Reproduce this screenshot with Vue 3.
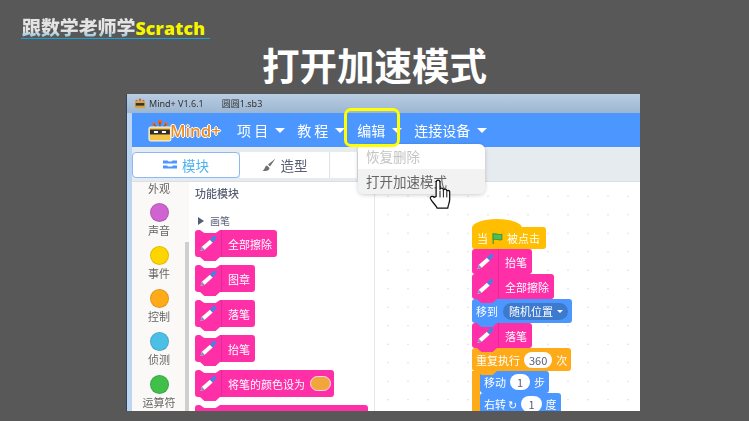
<script setup>
const menus = ["项 目", "教 程", "编辑", "连接设备"];
const cats = [
  { name: "声音", color: "#cf63cf" },
  { name: "事件", color: "#ffd500" },
  { name: "控制", color: "#ffab19" },
  { name: "侦测", color: "#4cbfe6" },
  { name: "运算符", color: "#40bf4a" },
];
const palette = ["全部擦除", "图章", "落笔", "抬笔"];
</script>

<template>
  <div class="slide">
    <svg class="defs">
      <symbol id="pen" viewBox="0 0 20 18">
        <path d="M1.500 17 3 12.500 11.500 5l3 3L6 15.500z" fill="#fff" />
        <path d="M11.500 5 15.500 1c1-.8 3.200 1.200 2.500 2.500L14.500 8z" fill="#3d86e6" />
        <path d="M1.500 17 3 12.500 6 15.500z" fill="#7f8fb5" />
      </symbol>
    </svg>

    <div class="head"><span>跟数学老师学</span><b>Scratch</b></div>
    <h1 class="title">打开加速模式</h1>

    <div class="window">
      <div class="titlebar">
        <svg class="mini" viewBox="0 0 14 12">
          <circle cx="7" cy="1.800" r="1.500" fill="#c8672a" />
          <circle cx="3" cy="2.800" r="1.200" fill="#c8672a" />
          <circle cx="11" cy="2.800" r="1.200" fill="#c8672a" />
          <rect x="1" y="3.500" width="12" height="8" rx="1" fill="#d9a23b" />
          <rect x="2" y="5.500" width="10" height="3" fill="#333" />
        </svg>
        <span>Mind+ V1.6.1</span>
        <span class="file">圆圆1.sb3</span>
      </div>

      <div class="menubar">
        <div class="logo">
          <svg viewBox="0 0 24 24" width="24" height="24">
            <circle cx="12" cy="4" r="2.200" fill="#e8672c" />
            <circle cx="6" cy="6" r="1.800" fill="#e8672c" />
            <circle cx="18" cy="6" r="1.800" fill="#e8672c" />
            <path d="M12 4v5M6 6l2 3M18 6l-2 3" stroke="#7a4a14" />
            <rect x="1" y="9" width="22" height="14" rx="1.500" fill="#f5c243" stroke="#fff" />
            <rect x="2" y="11.500" width="20" height="5" fill="#2d2d2d" />
            <rect x="6" y="13" width="4" height="2" fill="#fff" />
            <rect x="14" y="13" width="4" height="2" fill="#fff" />
          </svg>
          <span>Mind+</span>
        </div>
        <div v-for="m in menus" :key="m" class="menu">{{ m }}<i class="caret"></i></div>
      </div>

      <div class="tabs">
        <div class="tab active">
          <svg viewBox="0 0 14 9" width="14" height="9"><path d="M0 .500h4.500l1 1h3l1-1H14v3H0zM0 5.500h4l1 1h4l1-1h4v3H0z" fill="#4c97ff" /></svg>
          模块
        </div>
        <div class="tab second">
          <svg viewBox="0 0 14 14" width="14" height="14"><path d="M13.500.500 6 6.500 8 8.500zM5 7.500c-2.500.5-1.500 4-4.500 5 3.500 1.500 7 0 7-2.500z" fill="#707070" /></svg>
          造型
        </div>
        <div class="tab narrow"></div>
      </div>

      <div class="body">
        <div class="cats">
          <div class="cat-top">外观</div>
          <div v-for="c in cats" :key="c.name" class="cat">
            <i :style="{ background: c.color }"></i>
            <span>{{ c.name }}</span>
          </div>
          <div class="scroll"></div>
        </div>

        <div class="palette">
          <div class="pal-title">功能模块</div>
          <div class="pal-group"><i></i>画笔</div>
          <div v-for="p in palette" :key="p" class="block pink big">
            <span class="pen"><svg width="19" height="17"><use href="#pen" /></svg></span>
            {{ p }}
          </div>
          <div class="block pink big">
            <span class="pen"><svg width="19" height="17"><use href="#pen" /></svg></span>
            将笔的颜色设为
            <i class="swatch"></i>
          </div>
          <div class="block pink big cut"></div>
        </div>

        <div class="workspace">
          <div class="stack">
            <div class="hat">
              当
              <svg viewBox="0 0 12 12" width="13" height="13"><path d="M2 1v10" stroke="#3f8f3a" fill="none" /><path d="M2 2c3-1 5 1 8 0v5c-3 1-5-1-8 0z" fill="#4cbf56" stroke="#45993d" /></svg>
              被点击
            </div>
            <div class="block pink">
              <span class="pen"><svg width="19" height="17"><use href="#pen" /></svg></span>抬笔
            </div>
            <div class="block pink">
              <span class="pen"><svg width="19" height="17"><use href="#pen" /></svg></span>全部擦除
            </div>
            <div class="block blue tall">移到 <span class="drop">随机位置<i class="caret tiny"></i></span></div>
            <div class="block pink">
              <span class="pen"><svg width="19" height="17"><use href="#pen" /></svg></span>落笔
            </div>
            <div class="block orange">重复执行 <span class="num wide">360</span> 次</div>
            <div class="inner">
              <div class="block blue">移动 <span class="num">1</span> 步</div>
              <div class="block blue">右转 ↻ <span class="num">1</span> 度</div>
            </div>
          </div>
        </div>
      </div>

      <div class="dropdown">
        <div class="item off">恢复删除</div>
        <div class="item on">打开加速模式</div>
      </div>
      <div class="ring"></div>
      <svg class="hand" viewBox="0 0 22 32" width="22" height="31">
        <path d="M7 18V3.500c0-3 4-3 4 0V11c0-2 3.500-2 3.500 0v1c0-2 3.500-2 3.500 0v1c0-1.500 3-1.500 3 0v8c0 4-1.500 5-2 9H8c-1-3-6-7-7-10-.5-2 3-3 4-1z" fill="#fff" stroke="#111" stroke-width="1.300" />
        <path d="M11 12v7M14.500 12v7M18 13v6" stroke="#111" fill="none" />
      </svg>
    </div>
  </div>
</template>

<style>
html,
body {
  margin: 0;
}
</style>

<style scoped>
.slide {
  width: 749px;
  height: 421px;
  overflow: hidden;
  background: #585858;
  font-family: "Noto Sans CJK SC", "Noto Sans", sans-serif;
  display: flex;
  flex-direction: column;
  position: relative;
}
.defs {
  display: none;
}

/* header */
.head {
  margin: 15px 0 0 21px;
  width: 189px;
  height: 24px;
  box-sizing: border-box;
  padding-left: 1px;
  border-bottom: 1px solid #1c9fd0;
  font-size: 19px;
  line-height: 23px;
  font-weight: 900;
  white-space: nowrap;
  filter: blur(0.4px);
}
.head span {
  letter-spacing: -0.1px;
  color: transparent;
  background: linear-gradient(#e4e4e4 65%, #9ccbe0 85%);
  -webkit-background-clip: text;
  background-clip: text;
}
.head b {
  color: #f5f500;
  font-family: "Open Sans", sans-serif;
  font-size: 18px;
  font-weight: 800;
}
.title {
  margin: -2px 0 0;
  text-align: center;
  color: #fff;
  font-size: 37.5px;
  line-height: 54px;
  font-weight: 700;
}

/* window */
.window {
  position: relative;
  margin: 3px 0 0 127px;
  width: 513px;
  height: 317px;
  background: #bcd6f2;
  box-shadow: -1px 0 0 #33435a;
  font-size: 13px;
  color: #575e75;
  filter: blur(0.45px);
}
.titlebar {
  height: 19px;
  box-sizing: border-box;
  padding-left: 7px;
  display: flex;
  align-items: center;
  gap: 3px;
  background: linear-gradient(#b9cde2, #9cb6d2);
  color: #333;
  font-size: 9px;
  font-family: "Noto Sans", "Noto Sans CJK SC", sans-serif;
}
.mini {
  flex: none;
  width: 12px;
  height: 11px;
}
.file {
  margin-left: 15px;
}
.menubar {
  height: 34px;
  margin-left: 5px;
  background: #4c97ff;
  display: flex;
  align-items: center;
  color: #fff;
  font-size: 14px;
}
.logo {
  display: flex;
  align-items: center;
  margin: 0 16px 0 16px;
  width: 73px;
  color: #f08a1d;
  font-size: 17px;
  font-weight: 500;
  font-family: "Noto Sans", sans-serif;
  text-shadow: 1px 0 0 #fff, -1px 0 0 #fff, 0 1px 0 #fff, 0 -1px 0 #fff;
}
.logo span {
  margin-left: -2px;
}
.menu {
  display: flex;
  align-items: center;
  margin-right: 12px;
  white-space: nowrap;
}
.caret {
  display: block;
  margin-left: 7px;
  width: 0;
  height: 0;
  border: 5px solid transparent;
  border-top: 5px solid #fff;
  border-bottom: 0;
}
.caret.tiny {
  margin-left: 4px;
  border-width: 3px 3px 0;
}

/* tabs */
.tabs {
  height: 35px;
  margin-left: 5px;
  padding-top: 5px;
  box-sizing: border-box;
  background: #e6ebf0;
  border-bottom: 1px solid #d9dfe6;
  display: flex;
  color: #575e75;
  font-size: 13.5px;
}
.tab {
  width: 108px;
  height: 26px;
  padding-bottom: 1px;
  box-sizing: border-box;
  background: #fff;
  border-right: 1px solid #dce2e8;
  display: flex;
  align-items: center;
  justify-content: center;
  gap: 5px;
}
.tab.active {
  border: 1px solid #8ab9f5;
  border-radius: 4px;
  color: #4cb4f0;
}
.tab.second {
  width: 90px;
}
.tab.narrow {
  width: 28px;
}

/* left side */
.body {
  display: flex;
  height: 229px;
  margin-left: 5px;
  background: #fff;
}
.cats {
  position: relative;
  width: 57px;
  flex: none;
  box-sizing: border-box;
  padding-right: 3px;
  background: #faf9f7;
  text-align: center;
  font-size: 11px;
  color: #666;
}
.cat-top {
  line-height: 13px;
}
.cat {
  height: 43px;
  box-sizing: border-box;
  padding-top: 8px;
  display: flex;
  flex-direction: column;
  align-items: center;
  line-height: 14px;
}
.cat i {
  display: block;
  flex: none;
  width: 19px;
  height: 19px;
  box-sizing: border-box;
  border: 1px solid rgba(0, 0, 0, 0.12);
  border-radius: 50%;
  margin-bottom: 1px;
}
.scroll {
  position: absolute;
  right: 0;
  top: 60px;
  bottom: 0;
  width: 4px;
  background: #cfcfcf;
}
.palette {
  width: 186px;
  flex: none;
  box-sizing: border-box;
  padding: 4px 0 0 6px;
  border-right: 1px solid #e4e6ea;
  overflow: hidden;
}
.pal-title {
  font-size: 11px;
  font-weight: 500;
  line-height: 14px;
  color: #575e75;
}
.pal-group {
  display: flex;
  align-items: center;
  margin: 14px 0 3px 3px;
  font-size: 10px;
  line-height: 13px;
}
.pal-group i {
  width: 0;
  height: 0;
  margin-right: 6px;
  border: 4px solid transparent;
  border-left: 6px solid #575e75;
  border-right: 0;
}

/* blocks */
.block {
  position: relative;
  display: flex;
  align-items: center;
  width: max-content;
  height: 22px;
  line-height: 14px;
  padding: 0 4px;
  border-radius: 3px;
  color: #fff;
  font-size: 11px;
  white-space: nowrap;
}
.block.pink {
  background: #ff2fa8;
  height: 25px;
  padding-right: 5px;
}
.block.blue {
  background: #4c97ff;
}
.block.tall {
  height: 24px;
}
.block.orange {
  background: #ffab19;
  height: 23px;
}
.block::before {
  content: "";
  position: absolute;
  left: 5px;
  top: 0;
  width: 20px;
  height: 3px;
  background: #fff;
  clip-path: polygon(0 0, 100% 0, 78% 100%, 22% 100%);
}
.stack .block::before {
  display: none;
}
.block::after {
  content: "";
  position: absolute;
  left: 5px;
  top: 100%;
  width: 20px;
  height: 4px;
  background: inherit;
  clip-path: polygon(0 0, 100% 0, 78% 100%, 22% 100%);
  z-index: 1;
}
.block.big {
  height: 27px;
  margin-bottom: 8px;
  padding-right: 5px;
}
.block.cut {
  width: 173px;
  box-sizing: border-box;
  margin-bottom: 0;
}
.pen {
  width: 27px;
  height: 100%;
  margin: 0 6px 0 -4px;
  display: flex;
  align-items: center;
  justify-content: center;
  border-right: 1px solid #e5289a;
  box-sizing: border-box;
}
.stack .pen {
  margin-right: 6px;
}
.swatch {
  display: block;
  margin: 0 -2px 0 5px;
  width: 21px;
  height: 15px;
  border-radius: 8px;
  background: #f0a63a;
  box-sizing: border-box;
  border: 1px solid #ffd9ef;
}

/* workspace */
.workspace {
  flex: 1;
  padding: 37px 0 0 97px;
  overflow: hidden;
  background-color: #fff;
  background-image: radial-gradient(#dde0e5 0.9px, transparent 1px);
  background-size: 20px 18.500px;
  background-position: 3px 5px;
}
.stack {
  display: flex;
  flex-direction: column;
  align-items: flex-start;
}
.hat {
  position: relative;
  display: flex;
  align-items: center;
  gap: 3px;
  width: 74px;
  height: 22px;
  margin-top: 8px;
  padding: 0 5px;
  box-sizing: border-box;
  background: #ffbf00;
  color: #fff;
  font-size: 11px;
  line-height: 14px;
  border-radius: 0 3px 3px 3px;
  white-space: nowrap;
}
.hat::before {
  content: "";
  position: absolute;
  left: 0;
  top: -8px;
  width: 50px;
  height: 9px;
  background: #ffbf00;
  border-radius: 50% 50% 0 0 / 100% 100% 0 0;
}
.drop {
  display: flex;
  align-items: center;
  margin-left: 5px;
  height: 17px;
  padding: 0 5px 0 6px;
  border-radius: 9px;
  background: #3d79cc;
}
.num {
  display: inline-block;
  margin: 0 4px;
  padding: 0 7px;
  height: 16px;
  line-height: 16px;
  border-radius: 8px;
  background: #fff;
  color: #575e75;
}
.num.wide {
  padding: 0 5px;
}
.inner {
  box-sizing: border-box;
  border-left: 8px solid #ffab19;
}

/* overlays */
.dropdown {
  position: absolute;
  left: 231px;
  top: 50px;
  width: 127px;
  border-radius: 6px;
  background: #fff;
  box-shadow: 0 1px 4px rgba(0, 0, 0, 0.2);
  overflow: hidden;
  font-size: 13.5px;
  z-index: 3;
}
.item {
  height: 25px;
  line-height: 24px;
  padding-left: 8px;
}
.item.off {
  color: #c4c4c4;
}
.item.on {
  background: #f2f2f2;
  color: #666;
}
.ring {
  position: absolute;
  left: 217px;
  top: 14px;
  width: 56px;
  height: 39px;
  box-sizing: border-box;
  border: 3px solid #ffff00;
  border-radius: 7px;
  z-index: 4;
}
.hand {
  position: absolute;
  left: 302px;
  top: 85px;
  z-index: 5;
}
</style>
